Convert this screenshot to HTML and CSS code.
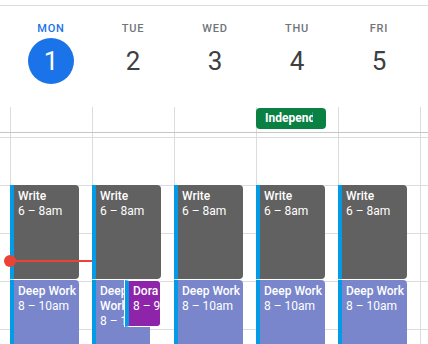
FILE: index.html
```html
<!DOCTYPE html>
<html>
<head>
<meta charset="utf-8">
<link rel="stylesheet" href="styles.css">
</head>
<body>
<div class="top-rule"></div>
<div class="header">
  <div class="gutter"></div>
  <div class="day today"><span class="dname">MON</span><span class="dnum">1</span></div>
  <div class="day"><span class="dname">TUE</span><span class="dnum">2</span></div>
  <div class="day"><span class="dname">WED</span><span class="dnum">3</span></div>
  <div class="day"><span class="dname">THU</span><span class="dnum">4</span></div>
  <div class="day"><span class="dname">FRI</span><span class="dnum">5</span></div>
  <div class="day"></div>
</div>
<div class="allday">
  <div class="gutter"></div>
  <div class="cell"></div>
  <div class="cell"></div>
  <div class="cell"></div>
  <div class="cell"><div class="chip"><span class="chip-text">Independence Day</span></div></div>
  <div class="cell"></div>
  <div class="cell"></div>
</div>
<div class="grid-body">
  <div class="gutter"></div>
  <div class="col">
    <div class="event write"><div class="title">Write</div><div class="time">6 – 8am</div></div>
    <div class="event deep"><div class="title">Deep Work</div><div class="time">8 – 10am</div></div>
    <div class="now-line"></div>
    <div class="now-dot"></div>
  </div>
  <div class="col">
    <div class="event write"><div class="title">Write</div><div class="time">6 – 8am</div></div>
    <div class="event deep narrow"><div class="title">Deep Work</div><div class="time">8 – 10am</div></div>
    <div class="event dora"><div class="title">Dora</div><div class="time">8 – 9am</div></div>
  </div>
  <div class="col">
    <div class="event write"><div class="title">Write</div><div class="time">6 – 8am</div></div>
    <div class="event deep"><div class="title">Deep Work</div><div class="time">8 – 10am</div></div>
  </div>
  <div class="col">
    <div class="event write"><div class="title">Write</div><div class="time">6 – 8am</div></div>
    <div class="event deep"><div class="title">Deep Work</div><div class="time">8 – 10am</div></div>
  </div>
  <div class="col">
    <div class="event write"><div class="title">Write</div><div class="time">6 – 8am</div></div>
    <div class="event deep"><div class="title">Deep Work</div><div class="time">8 – 10am</div></div>
  </div>
  <div class="col"></div>
</div>
</body>
</html>
```
FILE: styles.css
```css
* { box-sizing: border-box; }
html, body { margin: 0; padding: 0; background: #fff; }
body {
  font-family: Roboto, "Noto Sans", "Liberation Sans", sans-serif;
  width: 428px;
  height: 344px;
  overflow: hidden;
}
.top-rule {
  height: 6px;
  border-bottom: 1px solid #dadce0;
}
.header, .allday, .grid-body {
  display: grid;
  grid-template-columns: 10px repeat(5, 82px) 1fr;
}
.header { height: 101px; }
.day {
  display: flex;
  flex-direction: column;
  align-items: center;
  padding-top: 15px;
}
.dname {
  font-size: 11px;
  line-height: 16px;
  font-weight: 500;
  letter-spacing: 0.8px;
  color: #70757a;
}
.dnum {
  margin-top: 1px;
  width: 46px;
  height: 46px;
  border-radius: 50%;
  display: flex;
  align-items: center;
  justify-content: center;
  font-size: 26px;
  color: #3c4043;
}
.today .dname { color: #1a73e8; }
.today .dnum { background: #1a73e8; color: #fff; }

.allday {
  height: 26px;
  border-bottom: 1px solid #c4c7c5;
}
.cell {
  border-left: 1px solid #dadce0;
  padding-top: 1px;
}
.chip {
  margin-left: -1px;
  width: 70px;
  height: 21px;
  border-radius: 4px;
  background: #0b8043;
  color: #fff;
  font-size: 12px;
  font-weight: 700;
  line-height: 21px;
  padding: 0 13px 0 9px;
}
.chip-text {
  display: block;
  white-space: nowrap;
  overflow: hidden;
}

.grid-body {
  height: 211px;
  overflow: hidden;
  background-image: repeating-linear-gradient(to bottom, #dadce0 0, #dadce0 1px, transparent 1px, transparent 48px);
  background-position: 0 4px;
}
.col {
  position: relative;
  border-left: 1px solid #dadce0;
}
.event {
  position: absolute;
  left: -1px;
  width: 69px;
  height: 94px;
  border-left: 4px solid #039be5;
  border-radius: 0 4px 4px 0;
  padding: 4px 0 0 4px;
  color: #fff;
  font-size: 12px;
  line-height: 15px;
  overflow: hidden;
}
.event .title { font-weight: 500; }
.event .time { white-space: nowrap; }
.write { top: 52px; background: #616161; }
.deep { top: 147px; background: #7986cb; }
.deep.narrow { width: 58px; }
.dora {
  top: 147px;
  left: 32px;
  width: 36px;
  height: 47px;
  background: #8e24aa;
  border: 1px solid #fff;
  border-left: 4px solid #039be5;
  box-shadow: -1px 0 0 #fff;
  white-space: nowrap;
  z-index: 2;
  padding-top: 3px;
}
.now-line {
  position: absolute;
  left: -1px;
  width: 82px;
  top: 127px;
  height: 2px;
  background: #ea4335;
  z-index: 3;
}
.now-dot {
  position: absolute;
  left: -7px;
  top: 122px;
  width: 12px;
  height: 12px;
  border-radius: 50%;
  background: #ea4335;
  z-index: 3;
}
```
